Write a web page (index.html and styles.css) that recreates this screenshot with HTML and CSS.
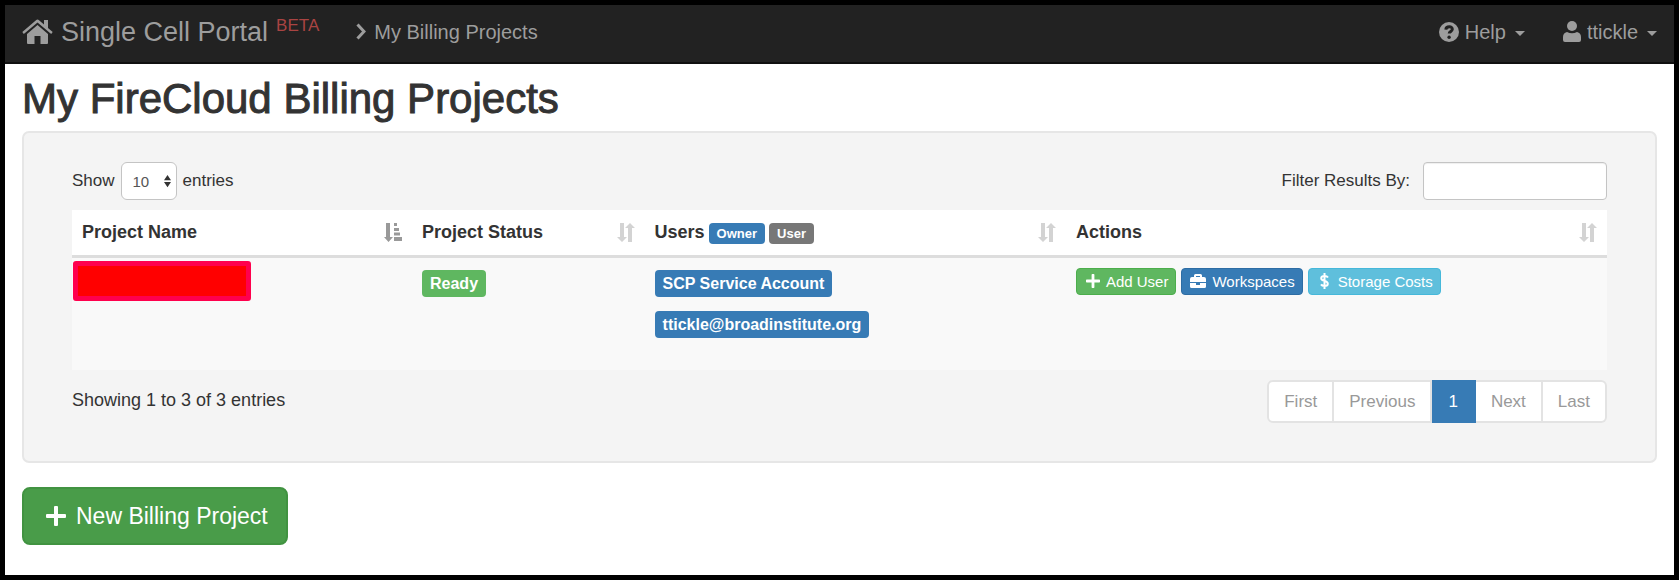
FILE: index.html
```html
<!DOCTYPE html>
<html lang="en">
<head>
<meta charset="utf-8">
<title>My Billing Projects - Single Cell Portal</title>
<link rel="stylesheet" href="styles.css">
</head>
<body>
<svg class="sprite" aria-hidden="true">
  <symbol id="sort" viewBox="0 0 18 19"><path d="M3 0h4v14h3l-5 5-5-5h3zM11 19h4V5h3l-5-5-5 5h3z"/></symbol>
  <symbol id="sort-asc" viewBox="0 0 18 19"><path d="M2 0h4v14h3l-4.500 5L0 14h2zM10 0h3v3h-3zM10 5h5v3h-5zM10 9.500h6v3h-6zM10 14h8v4h-8z"/></symbol>
  <symbol id="plus" viewBox="0 0 20 20"><path d="M8 1q0-1 1-1h2q1 0 1 1v7h7q1 0 1 1v2q0 1-1 1h-7v7q0 1-1 1H9q-1 0-1-1v-7H1q-1 0-1-1V9q0-1 1-1h7z"/></symbol>
</svg>
<header class="navbar">
  <a class="brand" href="#"><svg class="icon-home" viewBox="0 0 31 25" aria-hidden="true"><path d="M14 1.200q1.500-1.200 3 0l5 4.300V1h4v8l4.700 4.100-1.500 1.900L15.500 3.600 1.800 15 .3 13.100z"/><path d="M15.500 6 26 15v9q0 1-1 1h-6.500v-8h-6v8H6q-1 0-1-1v-9z"/></svg><span>Single Cell Portal</span><sup class="beta">BETA</sup></a>
  <a class="crumb" href="#"><svg class="icon-chevron" viewBox="0 0 10 17" aria-hidden="true"><path d="m1.500 1.500 6.500 7-6.500 7"/></svg>My Billing Projects</a>
  <nav class="nav-right">
    <a href="#"><svg class="icon-help" viewBox="0 0 20 20" aria-hidden="true"><circle cx="10" cy="10" r="10"/><path class="mark" d="M6.800 7.600c.4-3.700 6.800-3.700 6.500-.2-.2 2-3.100 2.200-3.100 4.200"/><circle class="dot" cx="10.100" cy="15.200" r="1.700"/></svg>Help<span class="caret"></span></a>
    <a href="#"><svg class="icon-user" viewBox="0 0 18 21" aria-hidden="true"><circle cx="9" cy="5" r="5"/><path d="M4 11q5 2.500 10 0 4 1 4 5v3q0 2-2 2H2q-2 0-2-2v-3q0-4 4-5z"/></svg>ttickle<span class="caret"></span></a>
  </nav>
</header>
<main>
  <h1>My FireCloud Billing Projects</h1>
  <section class="well">
    <div class="controls">
      <div class="length"><label for="length">Show</label>
        <span class="select-wrap"><select id="length"><option>10</option><option>25</option></select><svg viewBox="0 0 8 14" aria-hidden="true"><path d="M0 6h8L4 0zM0 8h8l-4 6z"/></svg></span>
        <span>entries</span></div>
      <div class="filter"><label for="filter">Filter Results By:</label><input id="filter" type="search"></div>
    </div>
    <table>
      <colgroup><col class="c-name"><col class="c-status"><col class="c-users"><col class="c-actions"></colgroup>
      <thead><tr>
        <th><div class="head">Project Name<button class="sort active" aria-label="Sort by project name"><svg><use href="#sort-asc"/></svg></button></div></th>
        <th><div class="head">Project Status<button class="sort" aria-label="Sort by status"><svg><use href="#sort"/></svg></button></div></th>
        <th><div class="head"><span class="legend">Users <span class="label owner">Owner</span> <span class="label user">User</span></span><button class="sort" aria-label="Sort by users"><svg><use href="#sort"/></svg></button></div></th>
        <th><div class="head">Actions<button class="sort" aria-label="Sort by actions"><svg><use href="#sort"/></svg></button></div></th>
      </tr></thead>
      <tbody><tr>
        <td class="name"><div class="redacted"></div></td>
        <td><span class="tag ready">Ready</span></td>
        <td><div class="people"><span class="tag owner">SCP Service Account</span><span class="tag owner">ttickle@broadinstitute.org</span></div></td>
        <td class="actions-cell"><div class="actions">
          <button class="btn green"><svg class="icon-plus"><use href="#plus"/></svg>Add User</button>
          <button class="btn blue"><svg class="icon-case" viewBox="0 0 16 14" aria-hidden="true"><path d="M4 3V1.500Q4 0 5.500 0h5Q12 0 12 1.500V3h2q2 0 2 2v3H0V5q0-2 2-2zm2 0h4V2H6zM0 9h6v2h4V9h6v3.500q0 1.500-1.500 1.500h-13Q0 14 0 12.500z"/></svg>Workspaces</button>
          <button class="btn cyan"><svg class="icon-dollar" viewBox="0 0 9 16" aria-hidden="true"><path d="M4.500 0v16M8 4.500Q7 3 4.500 3 1.200 3 1.200 5.300q0 1.900 3.300 2.600t3.300 2.800Q7.800 13 4.500 13 2 13 1 11.400"/></svg>Storage Costs</button>
        </div></td>
      </tr></tbody>
    </table>
    <div class="footer">
      <div class="info">Showing 1 to 3 of 3 entries</div>
      <nav class="pages" aria-label="Pages"><a href="#">First</a><a href="#">Previous</a><a class="current" href="#" aria-current="page">1</a><a href="#">Next</a><a href="#">Last</a></nav>
    </div>
  </section>
  <button class="new"><svg class="icon-new"><use href="#plus"/></svg>New Billing Project</button>
</main>
</body>
</html>
```
FILE: styles.css
```css
* { box-sizing: border-box; }
body {
  margin: 0;
  min-height: 100vh;
  border: 5px solid #000;
  background: #fff;
  color: #333;
  font: 17px/24px "Liberation Sans", Arial, sans-serif;
}
svg { display: block; flex: none; fill: currentColor; }
button, input, select { font-family: inherit; }
button { cursor: pointer; }
a { color: inherit; text-decoration: none; }
.sprite { position: absolute; width: 0; height: 0; }

.navbar {
  display: flex;
  align-items: center;
  height: 59px;
  padding: 0 17px 4px;
  background: #222;
  border-bottom: 2px solid #101010;
  color: #9d9d9d;
  font-size: 20px;
}
.navbar a { display: flex; align-items: center; }
.brand { gap: 8px; font-size: 27px; }
.icon-home { width: 31px; height: 25px; }
.beta { align-self: flex-start; color: #a94442; font-size: 17px; line-height: 14px; }
.crumb { gap: 8px; margin-left: 37px; }
.icon-chevron { width: 10px; height: 17px; fill: none; stroke: currentColor; stroke-width: 3; }
.nav-right { display: flex; gap: 38px; margin-left: auto; }
.nav-right a { gap: 6px; }
.icon-help { width: 20px; height: 20px; }
.icon-help .mark { fill: none; stroke: #222; stroke-width: 3; }
.icon-help .dot { fill: #222; }
.icon-user { width: 18px; height: 21px; }
.caret { margin: 4px 0 0 3px; border: 5px solid transparent; border-top-color: currentColor; border-bottom: 0; }

main { padding: 12px 17px 30px; }
h1 { margin: 0 0 10px; font-size: 42px; line-height: 45px; font-weight: 400; -webkit-text-stroke: 1px #333; }
.well {
  padding: 29px 48px 38px;
  border: 2px solid #e6e6e6;
  border-radius: 7px;
  background: #f4f4f4;
}
.controls { display: flex; justify-content: space-between; margin-bottom: 10px; }
.length, .filter { display: flex; align-items: center; }
.length { gap: 6px; }
.filter { gap: 13px; }
select, input {
  height: 38px;
  border: 1px solid #c4c4c4;
  border-radius: 6px;
  background: #fff;
  color: #555;
  font-size: 15px;
}
input { width: 184px; padding: 0 12px; border-radius: 4px; box-shadow: inset 0 1px 1px #0001; }
select { width: 56px; padding: 0 11px; appearance: none; }
.select-wrap { display: grid; align-items: center; }
.select-wrap > * { grid-area: 1 / 1; }
.select-wrap svg { width: 7px; height: 14px; justify-self: end; margin-right: 6px; pointer-events: none; }

table { width: 100%; border-collapse: collapse; table-layout: fixed; }
.c-name { width: 22.150%; }
.c-status { width: 15.150%; }
.c-users { width: 27.450%; }
.c-actions { width: 35.250%; }
th { height: 46px; padding: 0 10px; background: #fff; border-bottom: 3px solid #ddd; font-size: 18px; text-align: left; }
.head, .legend { display: flex; align-items: center; }
.head { justify-content: space-between; }
.legend { gap: 4px; }
.sort { padding: 0; border: 0; background: none; color: #d3d3d3; }
.sort.active { color: #999; }
.sort svg { width: 18px; height: 19px; }
td { height: 114px; padding: 12px 10px; background: #f9f9f9; vertical-align: top; }
td.name { padding: 3px 0 0 1px; }
.redacted { width: 178px; height: 40px; border: 5px solid #ff004d; border-radius: 3px; background: #f00; }
.label, .tag { border-radius: 4px; color: #fff; font-weight: 700; }
.label { margin-top: 2px; padding: 0 8px; font-size: 13px; line-height: 21px; }
.tag { display: inline-block; padding: 0 8px; font-size: 16px; line-height: 27px; }
.owner { background: #377bb5; }
.user { background: #777; }
.ready { background: #5fb760; }
.people { display: flex; flex-direction: column; align-items: flex-start; gap: 14px; }
td.actions-cell { padding-top: 10px; }
.actions { display: flex; gap: 5px; }
.btn {
  display: flex;
  align-items: center;
  gap: 6px;
  height: 27px;
  padding: 0 7px 0 9px;
  border: 1px solid;
  border-radius: 4px;
  color: #fff;
  font-size: 15px;
}
.green { background: #5fb760; border-color: #4cae4c; }
.blue { background: #377bb5; border-color: #2e6da4; padding-left: 8px; }
.cyan { background: #5fbfdc; border-color: #46b8da; padding-left: 11px; gap: 9px; }
.icon-plus { width: 14px; height: 14px; }
.icon-case { width: 16px; height: 14px; }
.icon-dollar { width: 9px; height: 16px; fill: none; stroke: currentColor; stroke-width: 2; }

.footer { display: flex; justify-content: space-between; align-items: flex-start; margin-top: 10px; }
.info { margin-top: 8px; font-size: 18px; }
.pages { display: flex; color: #999; }
.pages a { padding: 0 15px; border: 2px solid #e3e3e3; border-left-width: 0; background: #fff; line-height: 39px; }
.pages a:first-child { border-left-width: 2px; border-radius: 6px 0 0 6px; }
.pages a:last-child { border-radius: 0 6px 6px 0; }
.pages a.current { padding: 0 16px; background: #377bb5; border-color: #377bb5; color: #fff; }

.new {
  display: flex;
  align-items: center;
  gap: 10px;
  height: 58px;
  margin-top: 24px;
  padding: 0 18px 0 22px;
  border: 2px solid #419341;
  border-radius: 8px;
  background: #499c49;
  color: #fff;
  font-size: 23px;
}
.icon-new { width: 20px; height: 20px; }
```
